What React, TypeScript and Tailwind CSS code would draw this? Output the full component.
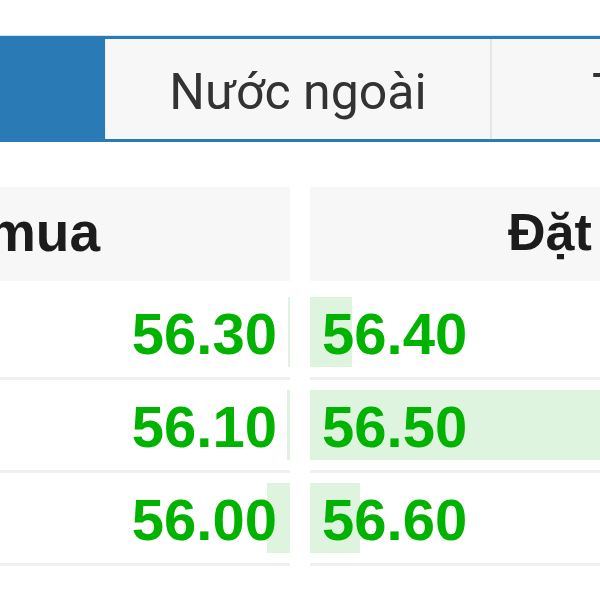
const rows = [
  { bid: '56.30', ask: '56.40', bidBar: 2, askBar: 42 },
  { bid: '56.10', ask: '56.50', bidBar: 3, askBar: 290 },
  { bid: '56.00', ask: '56.60', bidBar: 23, askBar: 50 },
];

export default function App() {
  return (
    <div className="w-[600px] h-[600px] overflow-hidden bg-white font-['Liberation_Sans',Arial,sans-serif]">
      <div className="h-[36px] border-b border-[#cfe9f7]" />

      {/* tabs */}
      <div className="flex h-[106px] border-y-[3px] border-[#2a7ab5] bg-[#2a7ab5]">
        <div className="w-[106px] shrink-0 border-r border-[#e3eef6] bg-[#2a7ab5]" />
        <div className="flex w-[386px] shrink-0 items-center justify-center border-r-2 border-[#e6e6e6] bg-[#f7f7f7] pt-[6px] font-['Roboto',sans-serif] text-[50px] text-[#333333] whitespace-nowrap">
          Nước ngoài
        </div>
        <div className="flex flex-1 items-center overflow-hidden bg-[#f7f7f7] pt-[6px] pl-[100px] font-['Roboto',sans-serif] text-[50px] text-[#333333] whitespace-nowrap">
          Tự doanh
        </div>
      </div>

      {/* header */}
      <div className="mt-[45px] flex h-[94px]">
        <div className="flex w-[290px] shrink-0 items-center justify-end overflow-hidden bg-[#f7f7f7] pr-[190px] pb-[4px] text-[55px] font-bold text-[#1c1c1c] whitespace-nowrap">
          Đặt mua
        </div>
        <div className="ml-[20px] flex flex-1 items-center overflow-hidden bg-[#f7f7f7] pl-[198px] pb-[4px] text-[52px] font-bold text-[#1c1c1c] whitespace-nowrap">
          Đặt bán
        </div>
      </div>

      {/* order book */}
      <div className="mt-[6px]">
        {rows.map((r) => (
          <div key={r.bid} className="flex">
            <div className="w-[290px] shrink-0 border-b-[3px] border-[#f0f0f0] py-[10px]">
              <div className="relative flex h-[70px] items-center justify-end pr-[13px] pt-[4px]">
                <div className="absolute right-0 top-0 h-full bg-[#def4df]" style={{ width: r.bidBar }} />
                <span className="relative text-[58px] font-bold leading-none text-[#00b300]">{r.bid}</span>
              </div>
            </div>
            <div className="ml-[20px] flex-1 border-b-[3px] border-[#f0f0f0] py-[10px]">
              <div className="relative flex h-[70px] items-center pl-[12px] pt-[4px]">
                <div className="absolute left-0 top-0 h-full bg-[#def4df]" style={{ width: r.askBar }} />
                <span className="relative text-[58px] font-bold leading-none text-[#00b300]">{r.ask}</span>
              </div>
            </div>
          </div>
        ))}
      </div>
    </div>
  );
}
